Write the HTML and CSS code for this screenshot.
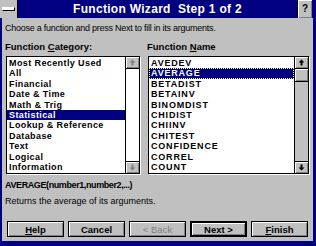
FILE: index.html
```
<!DOCTYPE html>
<html lang="en">
<head>
    <meta charset="UTF-8">
    <title>Function Wizard</title>
    <link rel="stylesheet" href="styles.css">
</head>
<body>
    <div class="win">
        <div class="titlebar">
            <div class="ctl"><span class="dash"></span></div>
            <div class="title">Function Wizard&nbsp; Step 1 of 2</div>
            <div class="qbtn">?</div>
        </div>
        <div class="client">
            <div class="hint">Choose a function and press Next to fill in its arguments.</div>
            <div class="cols">
                <div class="col cat">
                    <div class="label">Function <u>C</u>ategory:</div>
                    <div class="list">
                        <ul class="items">
                            <li>Most Recently Used</li>
                            <li>All</li>
                            <li>Financial</li>
                            <li>Date &amp; Time</li>
                            <li>Math &amp; Trig</li>
                            <li class="sel">Statistical</li>
                            <li>Lookup &amp; Reference</li>
                            <li>Database</li>
                            <li>Text</li>
                            <li>Logical</li>
                            <li>Information</li>
                        </ul>
                        <div class="sbar white">
                            <div class="sbtn off"><svg width="7" height="7" viewBox="0 0 7 7"><path d="M3.5 0.5 L6.5 3.5 H4.5 V6.5 H2.5 V3.5 H0.5 Z" fill="#808080"/></svg></div>
                            <div class="track"></div>
                            <div class="sbtn off"><svg width="7" height="7" viewBox="0 0 7 7"><path d="M3.5 6.5 L6.5 3.5 H4.5 V0.5 H2.5 V3.5 H0.5 Z" fill="#808080"/></svg></div>
                        </div>
                    </div>
                </div>
                <div class="col fn">
                    <div class="label">Function <u>N</u>ame</div>
                    <div class="list">
                        <ul class="items caps">
                            <li>AVEDEV</li>
                            <li class="sel focus">AVERAGE</li>
                            <li>BETADIST</li>
                            <li>BETAINV</li>
                            <li>BINOMDIST</li>
                            <li>CHIDIST</li>
                            <li>CHIINV</li>
                            <li>CHITEST</li>
                            <li>CONFIDENCE</li>
                            <li>CORREL</li>
                            <li>COUNT</li>
                        </ul>
                        <div class="sbar">
                            <div class="sbtn"><svg width="7" height="7" viewBox="0 0 7 7"><path d="M3.5 0.5 L6.5 3.5 H4.5 V6.5 H2.5 V3.5 H0.5 Z" fill="#000"/></svg></div>
                            <div class="thumb"></div>
                            <div class="track"></div>
                            <div class="sbtn"><svg width="7" height="7" viewBox="0 0 7 7"><path d="M3.5 6.5 L6.5 3.5 H4.5 V0.5 H2.5 V3.5 H0.5 Z" fill="#000"/></svg></div>
                        </div>
                    </div>
                </div>
            </div>
            <div class="syntax">AVERAGE(number1,number2,...)</div>
            <div class="desc">Returns the average of its arguments.</div>
            <div class="buttons">
                <button class="btn"><u>H</u>elp</button>
                <button class="btn">Cancel</button>
                <button class="btn dis">&lt; Back</button>
                <button class="btn def">Next &gt;</button>
                <button class="btn"><u>F</u>inish</button>
            </div>
        </div>
    </div>
</body>
</html>
```

FILE: styles.css
```
body {
    margin: 0;
    background: #000080;
    font-family: "Liberation Sans", Arial, sans-serif;
    font-size: 11px;
}
.win {
    width: 316px;
    height: 246px;
    background: #000080;
    display: flex;
    flex-direction: column;
}
.titlebar {
    height: 18px;
    display: flex;
    align-items: stretch;
}
.ctl {
    width: 17px;
    background: #c0c0c0;
    border-right: 1px solid #000;
    display: flex;
    align-items: center;
    justify-content: center;
}
.dash {
    width: 11px;
    height: 2px;
    background: #fff;
    border: 1px solid #000;
    border-top-color: #fff;
    border-left-color: #fff;
}
.title {
    flex: 1;
    color: #fff;
    font-weight: bold;
    font-size: 12px;
    text-align: center;
    line-height: 18px;
    letter-spacing: 0.3px;
}
.qbtn {
    width: 14px;
    margin-right: 4px;
    background: #c0c0c0;
    border-left: 1px solid #000;
    box-shadow: inset 1px 1px 0 #fff, inset -1px -1px 0 #808080;
    font-weight: bold;
    font-size: 10px;
    text-align: center;
    line-height: 18px;
}
.client {
    flex: 1;
    margin: 0 3px 5px 2px;
    background: #c0c0c0;
    padding: 4px 4px 0 4px;
    color: #000;
}
.hint {
    font-size: 9px;
    line-height: 13px;
    letter-spacing: -0.25px;
    margin-left: -1px;
}
.cols {
    display: flex;
    gap: 8px;
    margin-top: 6px;
}
.col.cat {
    width: 134px;
}
.col.fn {
    width: 161px;
}
.label {
    font-weight: bold;
    font-size: 9.5px;
    line-height: 12px;
    margin-left: -1px;
    margin-bottom: 3px;
}
.list {
    height: 116px;
    background: #fff;
    border: 1px solid #000;
    box-shadow: 1px 1px 0 #fff;
    display: flex;
}
.items {
    list-style: none;
    margin: 0;
    padding: 1px 0 0 0;
    flex: 1;
    font-weight: bold;
    font-size: 9px;
}
.items li {
    height: 10.4px;
    line-height: 10.4px;
    padding-left: 2px;
    letter-spacing: 0.4px;
    white-space: nowrap;
}
.items.caps li {
    letter-spacing: 0.8px;
}
.items li.sel {
    background: #000080;
    color: #fff;
}
.items li.focus {
    outline: 1px dotted #ffff80;
    outline-offset: -1px;
}
.sbar {
    width: 13px;
    border-left: 1px solid #000;
    background: #c0c0c0;
    display: flex;
    flex-direction: column;
}
.sbar.white {
    background: #fff;
}
.sbtn {
    height: 11px;
    background: #c0c0c0;
    box-shadow: inset 1px 1px 0 #fff, inset -1px -1px 0 #808080;
    border-bottom: 1px solid #000;
    display: flex;
    align-items: center;
    justify-content: center;
}
.sbtn:last-child {
    border-bottom: none;
    border-top: 1px solid #000;
}
.thumb {
    height: 12px;
    background: #c0c0c0;
    box-shadow: inset 1px 1px 0 #fff, inset -1px -1px 0 #808080;
    border-bottom: 1px solid #000;
}
.track {
    flex: 1;
}
.syntax {
    font-weight: bold;
    font-size: 9px;
    letter-spacing: -0.4px;
    margin-top: 5px;
    line-height: 12px;
    margin-left: -1px;
}
.desc {
    font-size: 9px;
    margin-top: 4px;
    line-height: 12px;
    margin-left: -1px;
}
.buttons {
    display: flex;
    gap: 4px;
    margin-top: 14px;
    padding-left: 1px;
}
.btn {
    width: 57px;
    height: 16px;
    padding: 0;
    background: #c0c0c0;
    border: 1px solid #000;
    box-shadow: inset 1px 1px 0 #fff, inset -1px -1px 0 #808080;
    font-family: "Liberation Sans", Arial, sans-serif;
    font-weight: bold;
    font-size: 9.5px;
    color: #000;
}
.btn.dis {
    color: #808080;
    font-weight: normal;
}
.btn.def {
    border-width: 2px;
}
```
